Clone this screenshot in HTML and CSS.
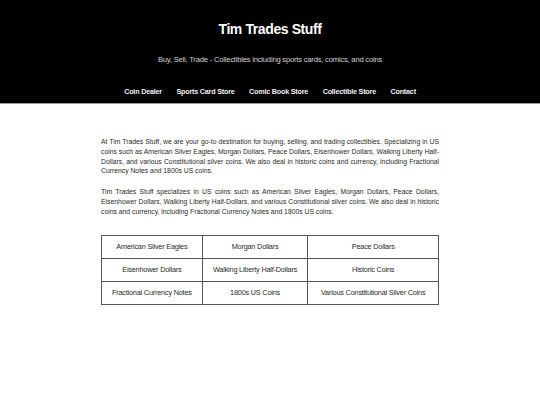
FILE: index.html
```html
<!DOCTYPE html>
<html lang="en">
<head>
<meta charset="utf-8">
<title>Tim Trades Stuff</title>
<link rel="stylesheet" href="styles.css">
</head>
<body>
<header class="site-header">
  <h1 class="site-title">Tim Trades Stuff</h1>
  <p class="tagline">Buy, Sell, Trade - Collectibles including sports cards, comics, and coins</p>
  <nav class="main-nav">
    <a href="#">Coin Dealer</a>
    <a href="#">Sports Card Store</a>
    <a href="#">Comic Book Store</a>
    <a href="#">Collectible Store</a>
    <a href="#">Contact</a>
  </nav>
</header>
<main class="content">
  <p class="intro">At Tim Trades Stuff, we are your go-to destination for buying, selling, and trading collectibles. Specializing in US coins such as American Silver Eagles, Morgan Dollars, Peace Dollars, Eisenhower Dollars, Walking Liberty Half-Dollars, and various Constitutional silver coins. We also deal in historic coins and currency, including Fractional Currency Notes and 1800s US coins.</p>
  <p class="intro">Tim Trades Stuff specializes in US coins such as American Silver Eagles, Morgan Dollars, Peace Dollars, Eisenhower Dollars, Walking Liberty Half-Dollars, and various Constitutional silver coins. We also deal in historic coins and currency, including Fractional Currency Notes and 1800s US coins.</p>
  <table class="coin-table">
    <colgroup>
      <col class="c1"><col class="c2"><col class="c3">
    </colgroup>
    <tr><td>American Silver Eagles</td><td>Morgan Dollars</td><td>Peace Dollars</td></tr>
    <tr><td>Eisenhower Dollars</td><td>Walking Liberty Half-Dollars</td><td>Historic Coins</td></tr>
    <tr><td>Fractional Currency Notes</td><td>1800s US Coins</td><td>Various Constitutional Silver Coins</td></tr>
  </table>
</main>
</body>
</html>
```

FILE: styles.css
```css
html, body {
  margin: 0;
  padding: 0;
  background: #ffffff;
}
body {
  font-family: "Liberation Sans", Arial, sans-serif;
  color: #2a2a2a;
}
.site-header {
  background: #000;
  color: #fff;
  text-align: center;
  padding: 19px 0 6px;
  border-bottom: 1px solid #9a9a9a;
}
.site-title {
  margin: 0;
  font-size: 14px;
  letter-spacing: -0.4px;
  line-height: 20px;
  font-weight: bold;
}
.tagline {
  margin: 16px 0 0;
  font-size: 7.6px;
  letter-spacing: -0.2px;
  line-height: 10px;
  color: #d0d0d0;
}
.main-nav {
  margin-top: 22px;
  display: flex;
  justify-content: center;
  gap: 14.5px;
}
.main-nav a {
  color: #f2f2f2;
  text-decoration: none;
  font-weight: bold;
  font-size: 7.2px;
  letter-spacing: -0.2px;
  line-height: 10px;
}
.content {
  width: 338px;
  margin: 0 auto;
  padding-top: 33px;
}
.intro {
  margin: 0 0 11px;
  font-size: 6.8px;
  line-height: 9.8px;
  text-align: justify;
}
.coin-table {
  width: 100%;
  margin-top: 18px;
  border-collapse: collapse;
  border: 1px solid #555;
}
.coin-table td {
  border: 1px solid #555;
  text-align: center;
  font-size: 7.3px;
  letter-spacing: -0.2px;
  line-height: 10px;
  height: 22px;
  padding: 0 3px;
  color: #2a2a2a;
}
.c1 { width: 101px; }
.c2 { width: 106px; }
.c3 { width: 131px; }
```
